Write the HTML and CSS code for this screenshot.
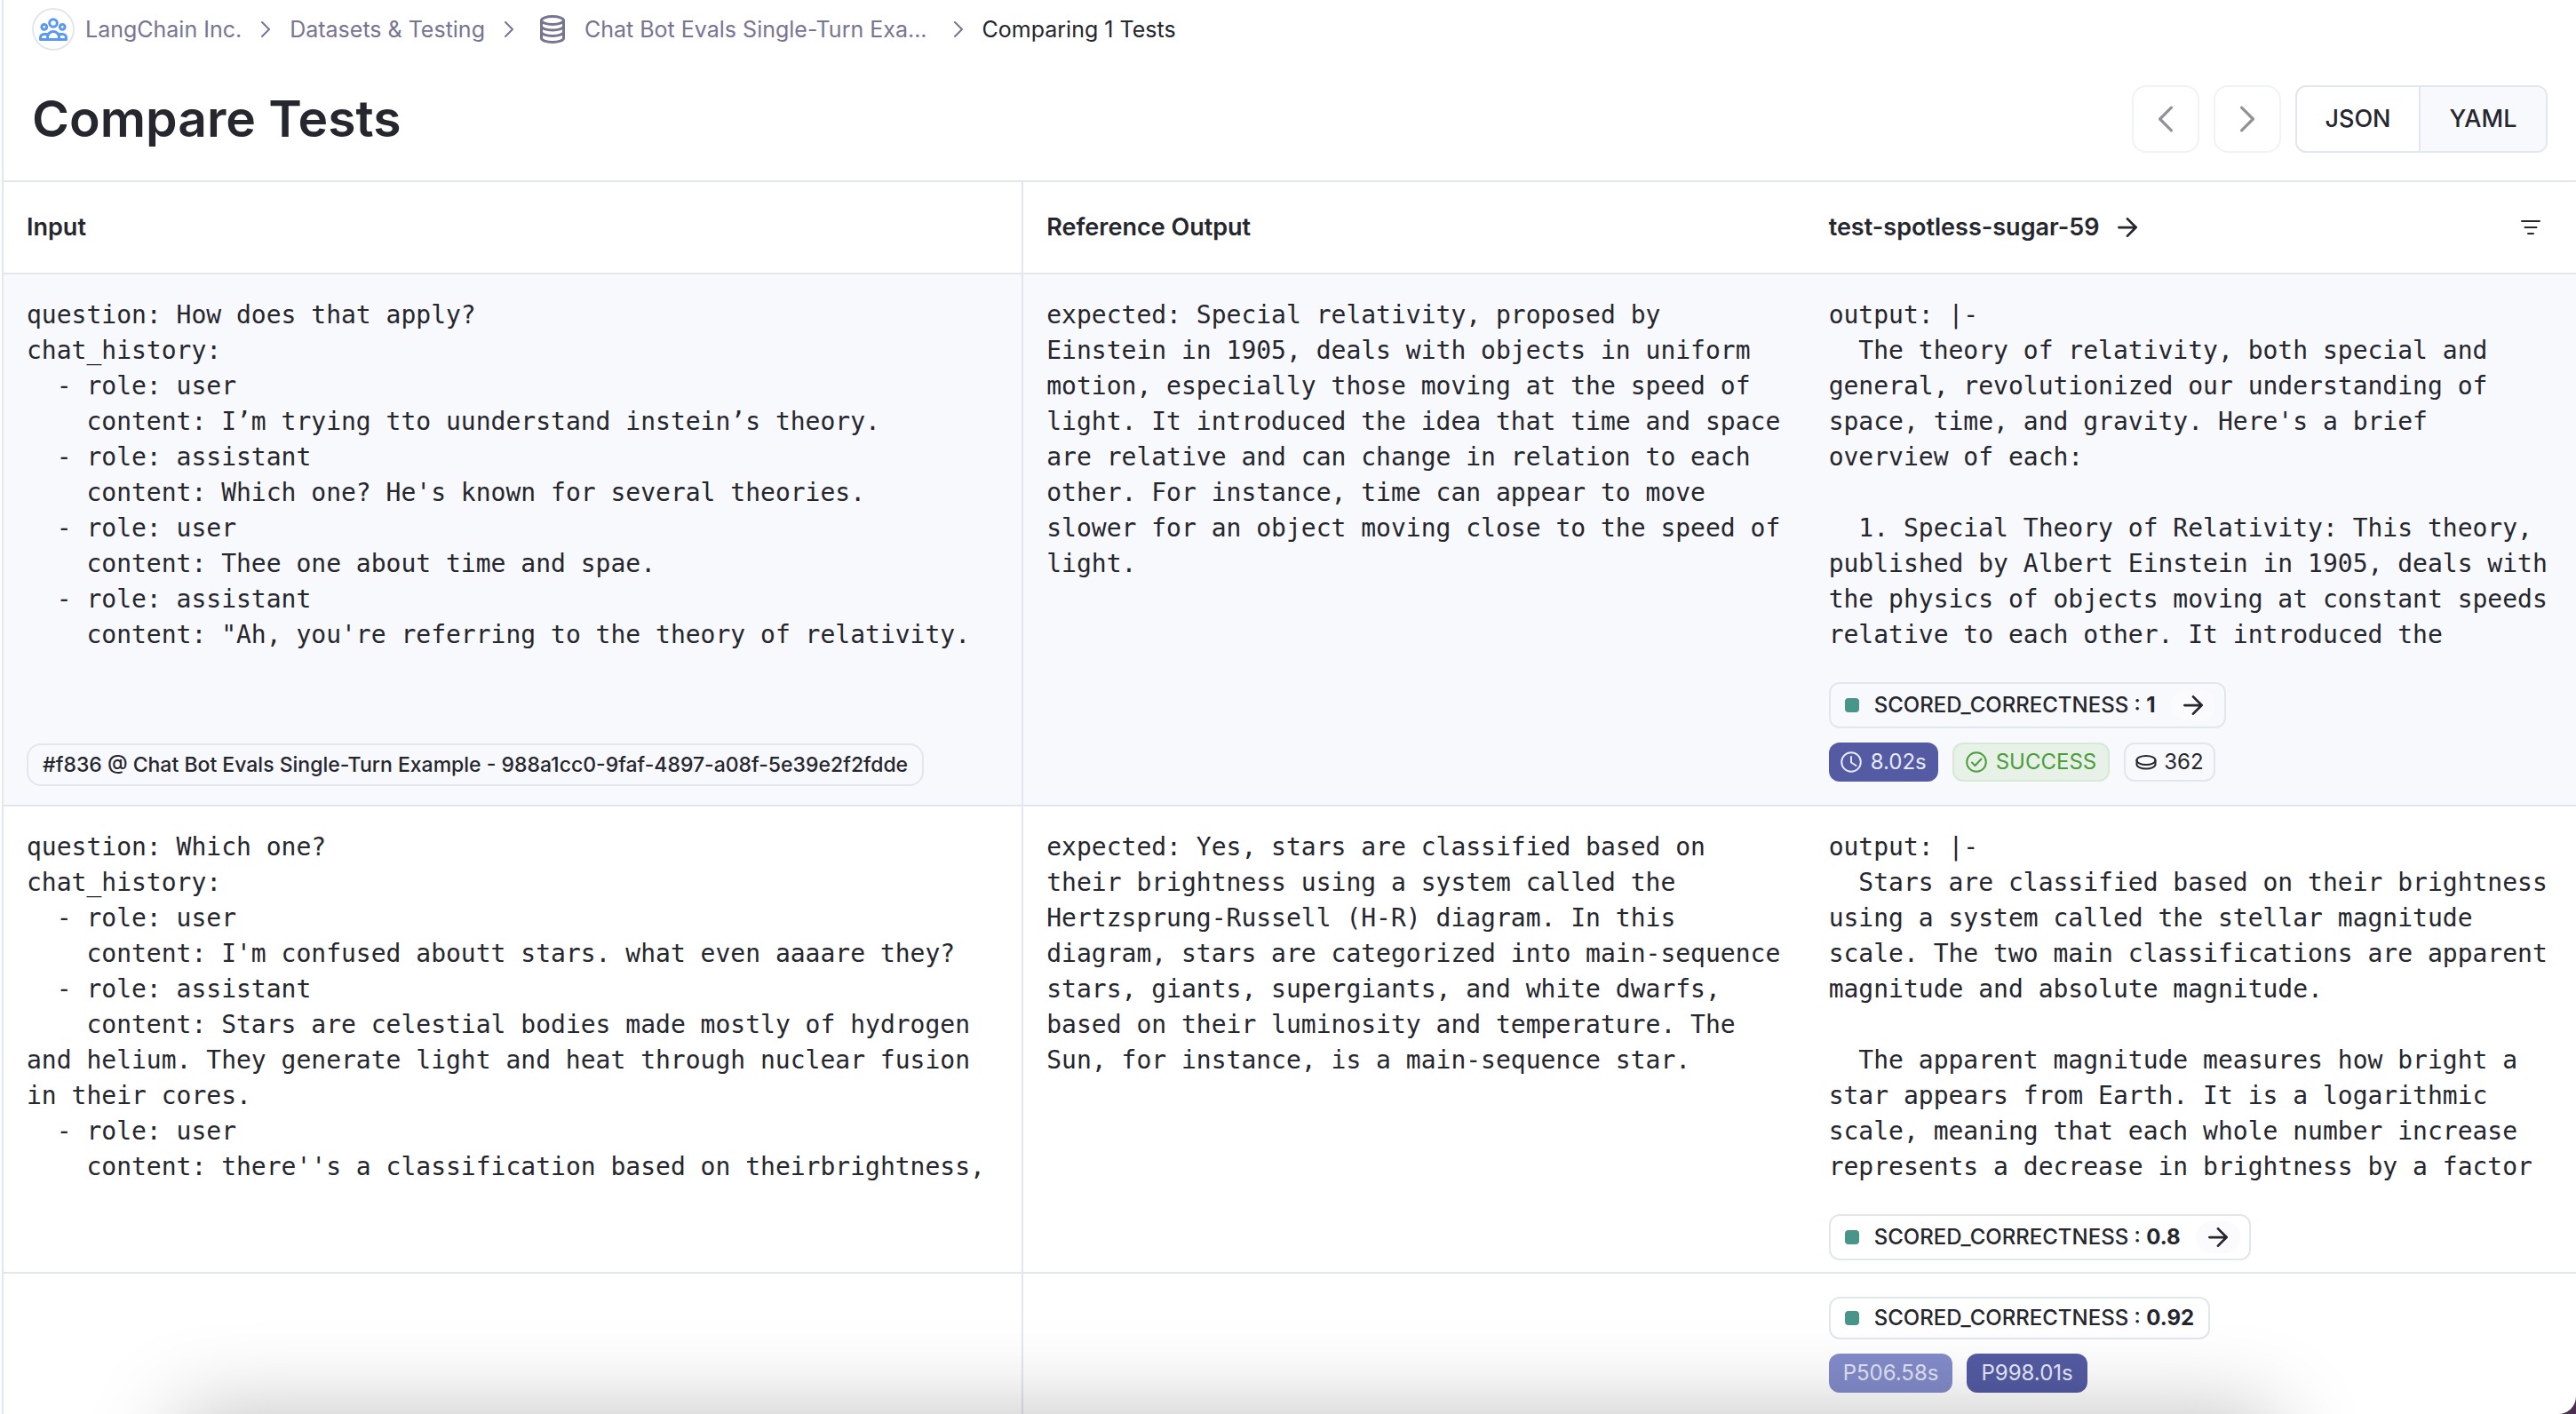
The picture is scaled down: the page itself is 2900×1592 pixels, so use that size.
FILE: index.html
```html
<!DOCTYPE html>
<html lang="en">
<head>
<meta charset="utf-8">
<meta name="viewport" content="width=device-width, initial-scale=1">
<title>Compare Tests</title>
<link rel="stylesheet" href="styles.css">
</head>
<body>
<svg class="sprite" aria-hidden="true">
  <symbol id="arrow" viewBox="0 0 24 24"><path d="M1.500 12h21M12 1.500l10.500 10.500-10.500 10.500"/></symbol>
  <symbol id="chevron" viewBox="0 0 10 18"><path d="M1 1l8 8-8 8"/></symbol>
</svg>
<div class="app">
  <header class="top">
    <nav class="crumbs" aria-label="Breadcrumb">
      <a class="crumb org" href="#">
        <span class="avatar"><svg class="people" viewBox="0 0 32 26" aria-hidden="true">
          <circle cx="16" cy="6" r="4.300"/><circle cx="5.800" cy="10.300" r="2.900"/><circle cx="26.200" cy="10.300" r="2.900"/>
          <path d="M9.500 24.500v-2.500a6.500 6.500 0 0 1 13 0v2.500zM9 18.500H5.500a4 4 0 0 0-4 4v2h8M23 18.500h3.500a4 4 0 0 1 4 4v2h-8"/>
        </svg></span>
        LangChain Inc.
      </a>
      <svg class="sep" aria-hidden="true"><use href="#chevron"/></svg>
      <a class="crumb" href="#">Datasets &amp; Testing</a>
      <svg class="sep" aria-hidden="true"><use href="#chevron"/></svg>
      <a class="crumb dataset" href="#">
        <svg class="db" viewBox="0 0 28 32" aria-hidden="true"><ellipse cx="14" cy="6" rx="12.500" ry="4.500"/><path d="M1.500 6v20c0 2.500 5.600 4.500 12.500 4.500s12.500-2 12.500-4.500V6M1.500 12.500c0 2.500 5.600 4.500 12.500 4.500s12.500-2 12.500-4.500M1.500 19c0 2.500 5.600 4.500 12.500 4.500s12.500-2 12.500-4.500"/></svg>
        <span class="dataset-name">Chat Bot Evals Single-Turn Exa...</span>
      </a>
      <svg class="sep" aria-hidden="true"><use href="#chevron"/></svg>
      <span class="crumb current" aria-current="page">Comparing 1 Tests</span>
    </nav>
    <div class="title-row">
      <h1>Compare Tests</h1>
      <div class="actions">
        <button class="step" type="button" disabled aria-label="Previous page"><svg class="back" aria-hidden="true"><use href="#chevron"/></svg></button>
        <button class="step" type="button" disabled aria-label="Next page"><svg aria-hidden="true"><use href="#chevron"/></svg></button>
        <div class="toggle" role="group" aria-label="Format">
          <button type="button" aria-pressed="false">JSON</button>
          <button type="button" aria-pressed="true">YAML</button>
        </div>
      </div>
    </div>
  </header>

  <main class="grid">
    <table>
      <colgroup><col class="col-input"><col class="col-ref"><col></colgroup>
      <thead>
        <tr>
          <th scope="col">Input</th>
          <th scope="col">Reference Output</th>
          <th scope="col">
            <div class="test-head">
              <a class="test-link" href="#">test-spotless-sugar-59 <svg class="arrow" aria-hidden="true"><use href="#arrow"/></svg></a>
              <button class="filter" type="button" aria-label="Filter"><svg viewBox="0 0 22 18" aria-hidden="true"><path d="M1 2h20M4.500 9h13M8 16h6"/></svg></button>
            </div>
          </th>
        </tr>
      </thead>
      <tbody>
        <tr class="active">
          <td class="input-cell">
            <div class="cell">
<pre>question: How does that apply?
chat_history:
  - role: user
    content: I’m trying tto uunderstand instein’s theory.
  - role: assistant
    content: Which one? He's known for several theories.
  - role: user
    content: Thee one about time and spae.
  - role: assistant
    content: "Ah, you're referring to the theory of relativity.</pre>
              <a class="example" href="#">#f836 @ Chat Bot Evals Single-Turn Example - 988a1cc0-9faf-4897-a08f-5e39e2f2fdde</a>
            </div>
          </td>
          <td>
<pre>expected: Special relativity, proposed by Einstein in 1905, deals with objects in uniform motion, especially those moving at the speed of light. It introduced the idea that time and space are relative and can change in relation to each other. For instance, time can appear to move slower for an object moving close to the speed of light.</pre>
          </td>
          <td>
            <div class="cell">
<pre>output: |-
  The theory of relativity, both special and general, revolutionized our understanding of space, time, and gravity. Here's a brief overview of each:

  1. Special Theory of Relativity: This theory, published by Albert Einstein in 1905, deals with the physics of objects moving at constant speeds relative to each other. It introduced the</pre>
              <div class="tags">
                <div class="score linked"><i class="dot"></i><span>SCORED_CORRECTNESS : <b>1</b></span><a class="go" href="#" aria-label="Open score"><svg class="arrow" aria-hidden="true"><use href="#arrow"/></svg></a></div>
                <div class="tag-row">
                  <span class="tag latency"><svg viewBox="0 0 24 24" aria-hidden="true"><circle cx="12" cy="12" r="10.800"/><path d="M12 6v6.500l5.500 3.500"/></svg>8.02s</span>
                  <span class="tag success"><svg viewBox="0 0 24 24" aria-hidden="true"><circle cx="12" cy="12" r="10.800"/><path d="M7 12.500l3.500 3.500 7-7.500"/></svg>SUCCESS</span>
                  <span class="tag tokens"><svg viewBox="0 0 24 24" aria-hidden="true"><ellipse cx="12" cy="10" rx="10.500" ry="5"/><path d="M1.500 10v4.500c0 2.800 4.700 5 10.500 5s10.500-2.200 10.500-5V10"/></svg>362</span>
                </div>
              </div>
            </div>
          </td>
        </tr>
        <tr>
          <td>
<pre>question: Which one?
chat_history:
  - role: user
    content: I'm confused aboutt stars. what even aaaare they?
  - role: assistant
    content: Stars are celestial bodies made mostly of hydrogen and helium. They generate light and heat through nuclear fusion in their cores.
  - role: user
    content: there''s a classification based on theirbrightness,</pre>
          </td>
          <td>
<pre>expected: Yes, stars are classified based on their brightness using a system called the Hertzsprung-Russell (H-R) diagram. In this diagram, stars are categorized into main-sequence stars, giants, supergiants, and white dwarfs, based on their luminosity and temperature. The Sun, for instance, is a main-sequence star.</pre>
          </td>
          <td>
            <div class="cell">
<pre>output: |-
  Stars are classified based on their brightness using a system called the stellar magnitude scale. The two main classifications are apparent magnitude and absolute magnitude.

  The apparent magnitude measures how bright a star appears from Earth. It is a logarithmic scale, meaning that each whole number increase represents a decrease in brightness by a factor</pre>
              <div class="tags">
                <div class="score linked"><i class="dot"></i><span>SCORED_CORRECTNESS : <b>0.8</b></span><a class="go" href="#" aria-label="Open score"><svg class="arrow" aria-hidden="true"><use href="#arrow"/></svg></a></div>
              </div>
            </div>
          </td>
        </tr>
      </tbody>
    </table>
  </main>

  <footer class="summary">
    <div class="summary-input"></div>
    <div class="summary-ref"></div>
    <div class="summary-test tags">
      <div class="score"><i class="dot"></i><span>SCORED_CORRECTNESS : <b>0.92</b></span></div>
      <div class="tag-row">
        <span class="tag percentile p50">P506.58s</span>
        <span class="tag percentile latency">P998.01s</span>
      </div>
    </div>
  </footer>
  <div class="shade"></div>
</div>
</body>
</html>
```
FILE: styles.css
```css
:root {
  --line: #e2e6ee;
  --ink: #26262e;
  --muted: #77758f;
  --tint: #f8f9fc;
  --indigo: #545ba3;
}

* { box-sizing: border-box; }

body {
  margin: 0;
  background: #4b2e52;
  color: var(--ink);
  font: 500 24px/32px Inter, "Liberation Sans", sans-serif;
}

a { color: inherit; text-decoration: none; }
button { font: inherit; color: inherit; background: none; padding: 0; cursor: pointer; }
svg { display: block; flex: none; fill: none; stroke: currentColor; stroke-width: 2; stroke-linecap: round; stroke-linejoin: round; }
.sprite { position: absolute; width: 0; height: 0; }

.app {
  position: relative;
  display: flex;
  flex-direction: column;
  height: 100vh;
  padding-left: 2px;
  background: #fff;
  border-bottom-right-radius: 20px;
  overflow: hidden;
}

.top, .grid, .summary { border-left: 2px solid var(--line); }

/* Page header */
.top { flex: none; padding: 8px 32px 31px; }

.crumbs { display: flex; align-items: center; gap: 22px; height: 50px; font-size: 25px; font-weight: 400; }
.crumb { color: var(--muted); white-space: nowrap; }
.current { color: var(--ink); }
.org, .dataset { display: flex; align-items: center; gap: 12px; }
.dataset { gap: 22px; padding: 0 8px; }
.avatar { display: grid; place-items: center; width: 48px; height: 48px; border: 2px solid var(--line); border-radius: 50%; background: #fff; }
.people { width: 32px; height: 26px; color: #5b98f3; stroke-width: 3; }
.sep { width: 10px; height: 18px; color: var(--muted); }
.db { width: 28px; height: 32px; stroke-width: 3; }

.title-row { display: flex; align-items: center; justify-content: space-between; margin-top: 38px; }
h1 { margin: 0; font-size: 57px; line-height: 76px; font-weight: 600; }
.actions { display: flex; gap: 16px; }
.step { display: grid; place-items: center; width: 76px; height: 76px; border: 2px solid #f0f2f7; border-radius: 16px; color: #929296; cursor: default; }
.step svg { width: 16px; height: 30px; }
.back { transform: rotate(180deg); }
.toggle { display: flex; height: 76px; border: 2px solid var(--line); border-radius: 12px; overflow: hidden; }
.toggle button { width: 137px; border: 0; font-size: 27px; font-weight: 500; }
.toggle button + button { width: 143px; border-left: 2px solid var(--line); }
.toggle [aria-pressed="true"] { background: var(--tint); }

/* Comparison table */
.grid { flex: 1; min-height: 0; overflow: auto; scrollbar-width: none; }
table { width: 100%; table-layout: fixed; border-collapse: separate; border-spacing: 0; border-top: 2px solid var(--line); }
.col-input, .summary-input { width: 39.65%; }
.col-ref, .summary-ref { width: 30.4%; }
th, td { padding: 26px; text-align: left; vertical-align: top; border-bottom: 2px solid var(--line); }
th:first-child, td:first-child, .summary-input { border-right: 2px solid var(--line); }
th { padding: 31px 26px; font-size: 27px; line-height: 40px; font-weight: 600; vertical-align: middle; }
td { height: 1px; padding-bottom: 26px; }
.active { background: var(--tint); }
.input-cell { padding-bottom: 21px; }
.cell { display: flex; flex-direction: column; justify-content: space-between; align-items: flex-start; gap: 33px; height: 100%; }
pre { margin: 0; min-height: 400px; font: 400 28px/40px "DejaVu Sans Mono", monospace; white-space: pre-wrap; }

.test-head { display: flex; align-items: center; justify-content: space-between; padding-right: 14px; }
.test-link { display: flex; align-items: center; gap: 20px; }
.arrow { width: 22px; height: 22px; stroke-width: 3; }
.filter { border: 0; }
.filter svg { width: 22px; height: 18px; }

/* Tags */
.tags { display: flex; flex-direction: column; align-items: flex-start; gap: 16px; }
.tag-row { display: flex; gap: 16px; }
.example { padding: 6px 16px; height: 48px; border: 2px solid var(--line); border-radius: 16px; font-size: 23px; white-space: nowrap; }
.score { display: flex; align-items: center; gap: 17px; height: 48px; padding: 0 16px; border: 2px solid var(--line); border-radius: 12px; white-space: nowrap; }
.linked { height: 52px; padding-right: 10px; }
.score b { font-weight: 700; }
.dot { width: 16px; height: 16px; border-radius: 4px; background: #48958a; }
.go { display: grid; place-items: center; width: 50px; height: 36px; border-radius: 18px; background: #fbfbfd; }
.tag { display: flex; align-items: center; gap: 10px; height: 44px; padding: 0 11px; border: 2px solid transparent; border-radius: 12px; font-weight: 400; }
.tag svg { width: 24px; height: 24px; }
.latency { background: var(--indigo); color: #e6e9f8; }
.percentile { padding: 0 14px; }
.p50 { background: #838cca; color: #e0e4f5; }
.success { padding: 0 13px; background: #e7f1e7; border-color: #d7e9d6; color: #4b9e3b; }
.tokens { gap: 8px; border-color: var(--line); }

/* Totals stay in view below the scrolling rows */
.summary { flex: none; display: flex; border-top: 2px solid var(--line); }
.summary-test { flex: 1; padding: 26px 26px 24px; }

/* Shadow of the panel docked just under the window */
.shade {
  position: absolute;
  top: 100%;
  left: 200px;
  right: 340px;
  height: 200px;
  border-radius: 16px;
  box-shadow: 0 0 100px rgba(0, 0, 0, .25);
  pointer-events: none;
}
```
